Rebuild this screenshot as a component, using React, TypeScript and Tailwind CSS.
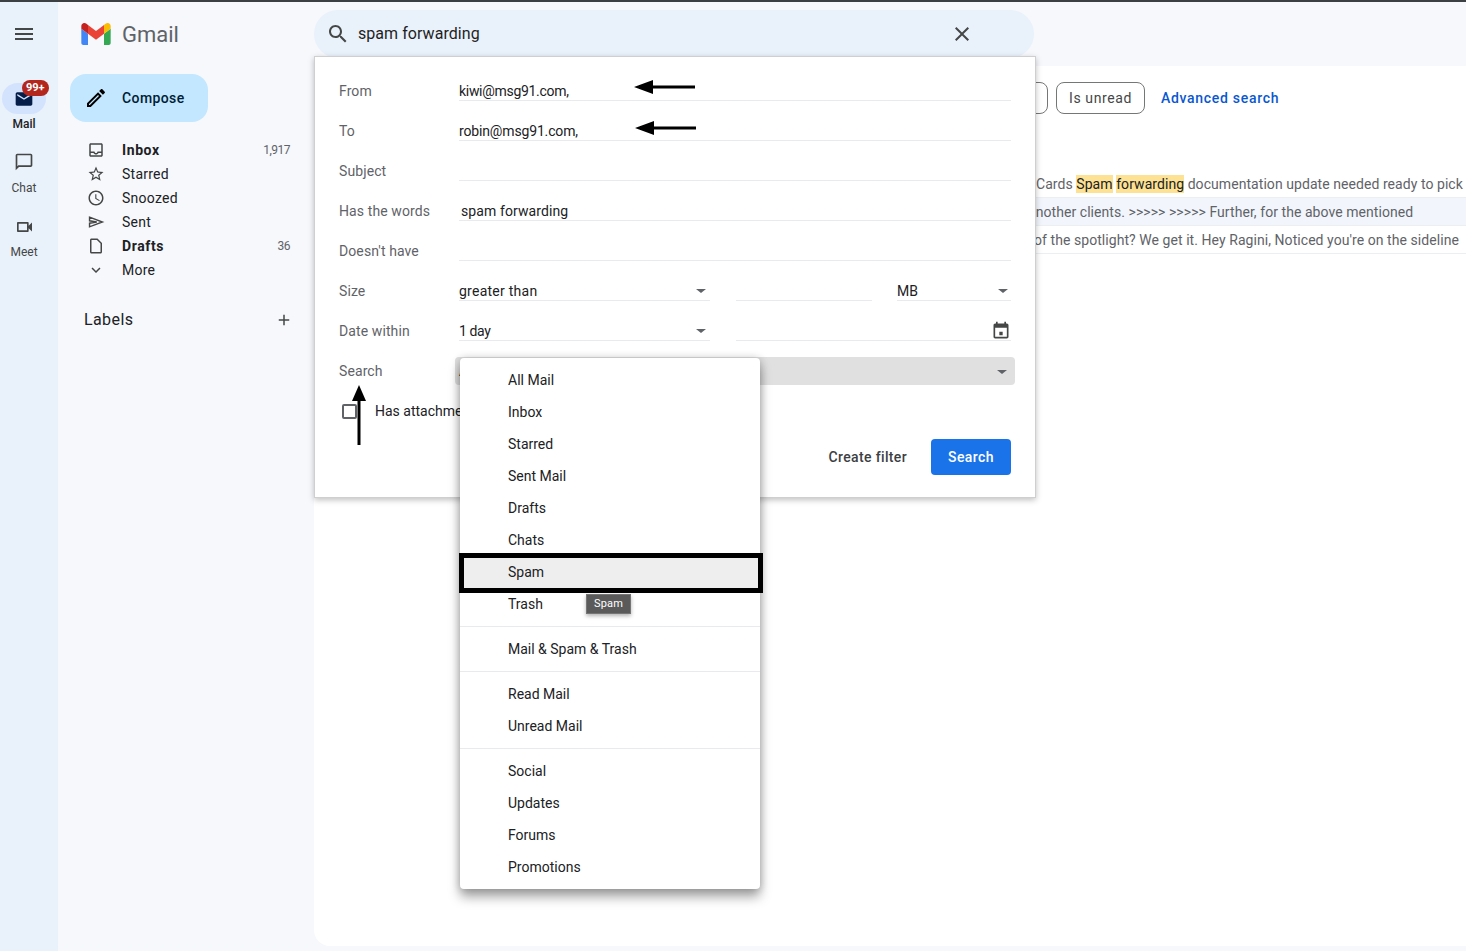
import React from 'react';

type IconProps = { d: string; className?: string };

const Icon: React.FC<IconProps> = ({ d, className }) => (
  <svg viewBox="0 0 24 24" fill="currentColor" className={className}>
    <path d={d} />
  </svg>
);

const paths = {
  menu: 'M3 18h18v-2H3v2zm0-5h18v-2H3v2zm0-7v2h18V6H3z',
  search:
    'M15.5 14h-.79l-.28-.27C15.41 12.59 16 11.11 16 9.5 16 5.91 13.09 3 9.5 3S3 5.91 3 9.5 5.91 16 9.5 16c1.61 0 3.09-.59 4.23-1.57l.27.28v.79l5 4.99L20.49 19l-4.99-5zm-6 0C7.01 14 5 11.99 5 9.5S7.01 5 9.5 5 14 7.01 14 9.5 11.99 14 9.5 14z',
  close:
    'M19 6.41L17.59 5 12 10.59 6.41 5 5 6.41 10.59 12 5 17.59 6.41 19 12 13.41 17.59 19 19 17.59 13.41 12z',
  inbox:
    'M19 3H4.99c-1.11 0-1.98.89-1.98 2L3 19c0 1.1.88 2 1.99 2H19c1.1 0 2-.9 2-2V5c0-1.11-.9-2-2-2zm0 16H5v-3h3.56c.69 1.19 1.97 2 3.45 2s2.75-.81 3.45-2H19v3zm0-5h-4.99c0 1.1-.9 2-2 2s-2-.9-2-2H5V5h14v9z',
  star: 'M22 9.24l-7.19-.62L12 2 9.19 8.63 2 9.24l5.46 4.73L5.82 21 12 17.27 18.18 21l-1.63-7.03L22 9.24zM12 15.4l-3.76 2.27 1-4.28-3.32-2.88 4.38-.38L12 6.1l1.71 4.04 4.38.38-3.32 2.88 1 4.28L12 15.4z',
  clock:
    'M11.99 2C6.47 2 2 6.48 2 12s4.47 10 9.99 10C17.52 22 22 17.52 22 12S17.52 2 11.99 2zM12 20c-4.42 0-8-3.58-8-8s3.58-8 8-8 8 3.58 8 8-3.58 8-8 8zm.5-13H11v6l5.25 3.15.75-1.23-4.5-2.67z',
  draft:
    'M14 2H6c-1.1 0-1.99.9-1.99 2L4 20c0 1.1.89 2 1.99 2H18c1.1 0 2-.9 2-2V8l-6-6zM6 20V4h7.17L18 8.83V20H6z',
  more: 'M16.59 8.59L12 13.17 7.41 8.59 6 10l6 6 6-6z',
  add: 'M19 13h-6v6h-2v-6H5v-2h6V5h2v6h6v2z',
  edit: 'M3 17.25V21h3.75L17.81 9.94l-3.75-3.75L3 17.25zM5.92 19H5v-.92l9.06-9.06.92.92L5.92 19zM20.71 7.04c.39-.39.39-1.02 0-1.41l-2.34-2.34c-.2-.2-.45-.29-.71-.29s-.51.1-.7.29l-1.83 1.83 3.75 3.75 1.83-1.83z',
  mail: 'M20 4H4c-1.1 0-2 .9-2 2v12c0 1.1.9 2 2 2h16c1.1 0 2-.9 2-2V6c0-1.1-.9-2-2-2zm0 4l-8 5-8-5V6l8 5 8-5v2z',
  chat: 'M20 2H4c-1.1 0-2 .9-2 2v18l4-4h14c1.1 0 2-.9 2-2V4c0-1.1-.9-2-2-2zm0 14H5.17L4 17.17V4h16v12z',
  video:
    'M15 8v8H5V8h10m1-2H4c-.55 0-1 .45-1 1v10c0 .55.45 1 1 1h12c.55 0 1-.45 1-1v-3.5l4 4v-11l-4 4V7c0-.55-.45-1-1-1z',
  calendar:
    'M14 13h-4v4h4v-4zM16 1v2H8V1H6v2H5c-1.11 0-1.99.9-1.99 2L3 19c0 1.1.89 2 2 2h14c1.1 0 2-.9 2-2V5c0-1.1-.9-2-2-2h-1V1h-2zm3 18H5V8h14v11z',
};

const SendIcon: React.FC<{ className?: string }> = ({ className }) => (
  <svg viewBox="0 0 24 24" fill="none" stroke="currentColor" strokeWidth="1.9" className={className}>
    <path d="M3.4 5.6 L20.5 12 L3.4 18.4 V13.6 L13 12 L3.4 10.4 Z" />
  </svg>
);

const navItems = [
  { label: 'Inbox', icon: paths.inbox, count: '1,917', bold: true },
  { label: 'Starred', icon: paths.star },
  { label: 'Snoozed', icon: paths.clock },
  { label: 'Sent' },
  { label: 'Drafts', icon: paths.draft, count: '36', bold: true },
  { label: 'More', icon: paths.more },
];

const folderGroups = [
  ['All Mail', 'Inbox', 'Starred', 'Sent Mail', 'Drafts', 'Chats', 'Spam', 'Trash'],
  ['Mail & Spam & Trash'],
  ['Read Mail', 'Unread Mail'],
  ['Social', 'Updates', 'Forums', 'Promotions'],
];

const Caret = () => (
  <div className="mt-[1px] h-0 w-0 border-x-[5px] border-t-[4px] border-x-transparent border-t-[#5f6368]" />
);

const FormRow: React.FC<{ label: string; children: React.ReactNode }> = ({ label, children }) => (
  <div className="flex h-10 items-end">
    <div className="h-5 w-[120px] shrink-0 text-[14px] leading-5 tracking-[0.1px] text-[#5f6368]">{label}</div>
    {children}
  </div>
);

const TextField: React.FC<{ value?: string; className?: string }> = ({ value, className }) => (
  <div className={`h-5 flex-1 border-b border-[#e8eaed] text-[14px] leading-5 text-[#202124] ${className ?? ''}`}>
    {value}
  </div>
);

const SelectField: React.FC<{ value: string; className: string; textClass?: string }> = ({ value, className, textClass }) => (
  <div className={`flex h-5 items-center justify-between border-b border-[#e8eaed] text-[14px] leading-5 text-[#202124] ${className}`}>
    <span className={textClass}>{value}</span>
    <Caret />
  </div>
);

const Arrow: React.FC<{ className: string }> = ({ className }) => (
  <svg viewBox="0 0 62 16" className={`absolute h-4 w-[62px] ${className}`}>
    <path d="M0 8 L19 1 L19 6.5 L61 6.5 L61 9.5 L19 9.5 L19 15 Z" fill="#000" />
  </svg>
);

const Rail = () => (
  <div className="flex w-[58px] shrink-0 flex-col items-center bg-[#e9f1fb] pr-[10px] font-['Roboto',sans-serif]">
    <div className="mt-[20px] flex h-6 items-center text-[#444746]">
      <Icon d={paths.menu} className="h-6 w-6" />
    </div>
    <div className="relative mt-[37px] flex h-[31px] w-[44px] shrink-0 items-center justify-center rounded-2xl bg-[#d3e3fd] text-[#041e49]">
      <Icon d={paths.mail} className="h-5 w-5" />
      <span className="absolute left-[20px] top-[-3px] rounded-full bg-[#b3261e] px-[4px] text-[11px] font-bold leading-[16px] text-white">
        99+
      </span>
    </div>
    <div className="mt-[2px] text-[12px] font-medium leading-4 text-[#202124]">Mail</div>
    <div className="mt-[20px] h-5 text-[#444746]">
      <Icon d={paths.chat} className="h-5 w-5" />
    </div>
    <div className="mt-[8px] text-[12px] leading-4 text-[#444746]">Chat</div>
    <div className="mt-[21px] h-5 text-[#444746]">
      <Icon d={paths.video} className="h-5 w-[21px]" />
    </div>
    <div className="mt-[7px] text-[12px] leading-4 text-[#444746]">Meet</div>
  </div>
);

const Sidebar = () => (
  <div className="w-[256px] shrink-0 font-['Roboto',sans-serif]">
    <div className="ml-[23px] mt-[21px] flex h-[22px] items-center gap-[11px]">
      <svg viewBox="52 42 88 66" className="h-[22px] w-[30px]">
        <path fill="#4285f4" d="M58 108h14V74L52 59v43c0 3.32 2.69 6 6 6" />
        <path fill="#34a853" d="M120 108h14c3.32 0 6-2.69 6-6V59l-20 15" />
        <path fill="#fbbc04" d="M120 48v26l20-15v-8c0-7.42-8.47-11.65-14.4-7.2" />
        <path fill="#ea4335" d="M72 74V48l24 18 24-18v26L96 92" />
        <path fill="#c5221f" d="M52 51v8l20 15V48l-5.6-4.2c-5.94-4.45-14.4-.22-14.4 7.2" />
      </svg>
      <span className="pt-[2px] text-[22px] leading-[22px] text-[#5f6368]">Gmail</span>
    </div>
    <button className="ml-3 mt-[29px] flex h-12 w-[138px] items-center rounded-2xl bg-[#c2e7ff] text-[14px] font-medium tracking-[0.4px] text-[#001d35]">
      <Icon d={paths.edit} className="ml-[14px] h-6 w-6 text-black" />
      <span className="ml-[14px]">Compose</span>
    </button>
    <div className="mt-4">
      {navItems.map((item) => (
        <div key={item.label} className="flex h-6 items-center pl-[29px] pr-6">
          {item.icon ? (
            <Icon d={item.icon} className="h-[18px] w-[18px] shrink-0 text-[#444746]" />
          ) : (
            <SendIcon className="h-[18px] w-[18px] shrink-0 text-[#444746]" />
          )}
          <span
            className={`ml-[17px] flex-1 text-[14px] text-[#202124] ${item.bold ? 'font-bold tracking-[0.6px]' : 'tracking-[0.25px]'}`}
          >
            {item.label}
          </span>
          {item.count && <span className="text-[12px] tracking-[-0.5px] text-[#5f6368]">{item.count}</span>}
        </div>
      ))}
    </div>
    <div className="mt-[26px] flex h-6 items-center justify-between pl-[26px] pr-[21px]">
      <span className="text-[16px] tracking-[0.4px] text-[#202124]">Labels</span>
      <Icon d={paths.add} className="h-[18px] w-[18px] text-[#444746]" />
    </div>
  </div>
);

const SearchForm = () => (
  <div className="absolute left-0 top-[54px] z-10 w-[722px] border border-[#cfcfcf] bg-white pb-[22px] pl-6 pr-6 pt-1 font-['Roboto',sans-serif] shadow-[0_2px_6px_rgba(0,0,0,0.25)]">
    <div className="relative">
      <FormRow label="From">
        <TextField value="kiwi@msg91.com," className="tracking-[-0.3px]" />
      </FormRow>
      <FormRow label="To">
        <TextField value="robin@msg91.com," className="tracking-[-0.15px]" />
      </FormRow>
      <FormRow label="Subject">
        <TextField />
      </FormRow>
      <FormRow label="Has the words">
        <TextField value="spam forwarding" className="pl-[2px] tracking-[0.1px]" />
      </FormRow>
      <FormRow label="Doesn't have">
        <TextField />
      </FormRow>
      <FormRow label="Size">
        <SelectField value="greater than" className="w-[251px] pr-1" textClass="tracking-[0.25px]" />
        <div className="ml-[26px] h-5 w-[136px] border-b border-[#e8eaed]" />
        <SelectField value="MB" className="ml-[25px] w-[114px] pr-[3px]" />
      </FormRow>
      <FormRow label="Date within">
        <SelectField value="1 day" className="w-[251px] pr-1" textClass="tracking-[-0.4px]" />
        <div className="ml-[26px] flex h-5 flex-1 items-center justify-end border-b border-[#e8eaed] text-[#444746]">
          <Icon d={paths.calendar} className="h-5 w-5" />
        </div>
      </FormRow>
      <FormRow label="Search">
        <div className="relative -mb-1 -ml-1 -mr-1 flex h-7 flex-1 items-center justify-between rounded bg-[#e0e0e0] pl-1 pr-2 text-[14px] text-[#202124]">
          <span>All Mail</span>
          <Caret />
        </div>
      </FormRow>
      <div className="flex h-10 items-end">
        <div className="flex h-5 items-center">
          <div className="ml-[3px] h-[15px] w-[15px] rounded-[2px] border-2 border-[#5f6368]" />
          <span className="ml-[18px] text-[14px] text-[#202124]">Has attachments</span>
        </div>
      </div>
      <div className="mt-[18px] flex items-center justify-end gap-6">
        <span className="text-[14px] font-medium tracking-[0.35px] text-[#3c4043]">Create filter</span>
        <button className="h-9 w-20 rounded bg-[#1a73e8] text-[14px] font-medium tracking-[0.4px] text-white">Search</button>
      </div>
      <Arrow className="left-[295px] top-[18px]" />
      <Arrow className="left-[296px] top-[59px]" />
      <svg viewBox="0 0 16 60" className="absolute left-[12px] top-[324px] h-[60px] w-4">
        <path d="M8 0 L15 16 L9.5 16 L9.5 60 L6.5 60 L6.5 16 L1 16 Z" fill="#000" />
      </svg>
    </div>
    <FolderMenu />
  </div>
);

const FolderMenu = () => (
  <div className="absolute left-[145px] top-[301px] z-20 w-[300px] rounded bg-white shadow-[0_8px_12px_rgba(0,0,0,0.35),0_0_8px_rgba(0,0,0,0.2)]">
    {folderGroups.map((group, i) => (
      <div key={group[0]} className={`py-1.5 ${i > 0 ? 'border-t border-[#e8eaed]' : ''}`}>
        {group.map((name) => (
          <div
            key={name}
            className={`relative flex h-8 items-center pl-12 text-[14px] text-[#202124] ${name === 'Spam' ? 'bg-[#eeeeee]' : ''}`}
          >
            {name}
            {name === 'Spam' && (
              <div className="absolute -left-px -right-[3px] -top-[3px] -bottom-[5px] border-[5px] border-black" />
            )}
            {name === 'Trash' && (
              <div className="absolute left-[126px] top-[6px] flex h-5 w-[45px] items-center justify-center border border-[#757575] bg-[#5a5a5a] pt-[1px] text-[11px] tracking-[0.2px] text-white shadow-[0_2px_4px_rgba(0,0,0,0.3)]">
                Spam
              </div>
            )}
          </div>
        ))}
      </div>
    ))}
  </div>
);

const MailRow: React.FC<{ pad: string; shaded?: boolean; children: React.ReactNode }> = ({ pad, shaded, children }) => (
  <div
    className={`h-7 overflow-hidden whitespace-nowrap border-b border-[#eceff1] text-[14px] leading-[29px] tracking-[0.06px] text-[#5f6368] ${pad} ${shaded ? 'bg-[#f2f6fc]' : ''}`}
  >
    {children}
  </div>
);

export default function App() {
  return (
    <div className="flex h-[951px] w-[1466px] flex-col overflow-hidden bg-[#f6f8fc] font-['Roboto',sans-serif]">
      <div className="h-[2px] shrink-0 bg-[#3c4043]" />
      <div className="flex min-h-0 flex-1">
        <Rail />
        <Sidebar />
        <div className="relative flex min-w-0 flex-1 flex-col pb-[5px]">
          <div className="flex h-16 shrink-0 items-start">
            <div className="mt-2 flex h-12 w-[720px] items-center rounded-3xl bg-[#e9f1fb] pl-3">
              <div className="flex text-[#444746]">
                <Icon d={paths.search} className="h-6 w-6" />
              </div>
              <span className="ml-2 flex-1 text-[16px] tracking-[0.05px] text-[#1f1f1f]">spam forwarding</span>
              <Icon d={paths.close} className="mb-[1px] mr-[60px] h-6 w-6 text-[#444746]" />
            </div>
          </div>
          <div className="flex-1 overflow-hidden rounded-l-2xl bg-white">
            <div className="flex h-[48px] items-end gap-4 pl-[714px]">
              <div className="h-8 w-5 rounded-lg border border-[#747775]" />
              <div className="-ml-2 flex h-8 w-[89px] items-center justify-center rounded-lg border border-[#747775] text-[14px] tracking-[0.6px] text-[#444746]">
                Is unread
              </div>
              <span className="text-[14px] font-medium leading-8 tracking-[0.7px] text-[#0b57d0]">Advanced search</span>
            </div>
            <div className="mt-[56px]">
              <MailRow pad="pl-[722px]">
                Cards <span className="bg-[#fde293] py-px text-[#202124]">Spam</span>{' '}
                <span className="bg-[#fde293] py-px text-[#202124]">forwarding</span> documentation update needed ready to pick
              </MailRow>
              <MailRow pad="pl-[714px]" shaded>
                another clients. &gt;&gt;&gt;&gt;&gt; &gt;&gt;&gt;&gt;&gt; Further, for the above mentioned
              </MailRow>
              <MailRow pad="pl-[720px]">of the spotlight? We get it. Hey Ragini, Noticed you're on the sideline</MailRow>
            </div>
          </div>
          <SearchForm />
        </div>
      </div>
    </div>
  );
}
